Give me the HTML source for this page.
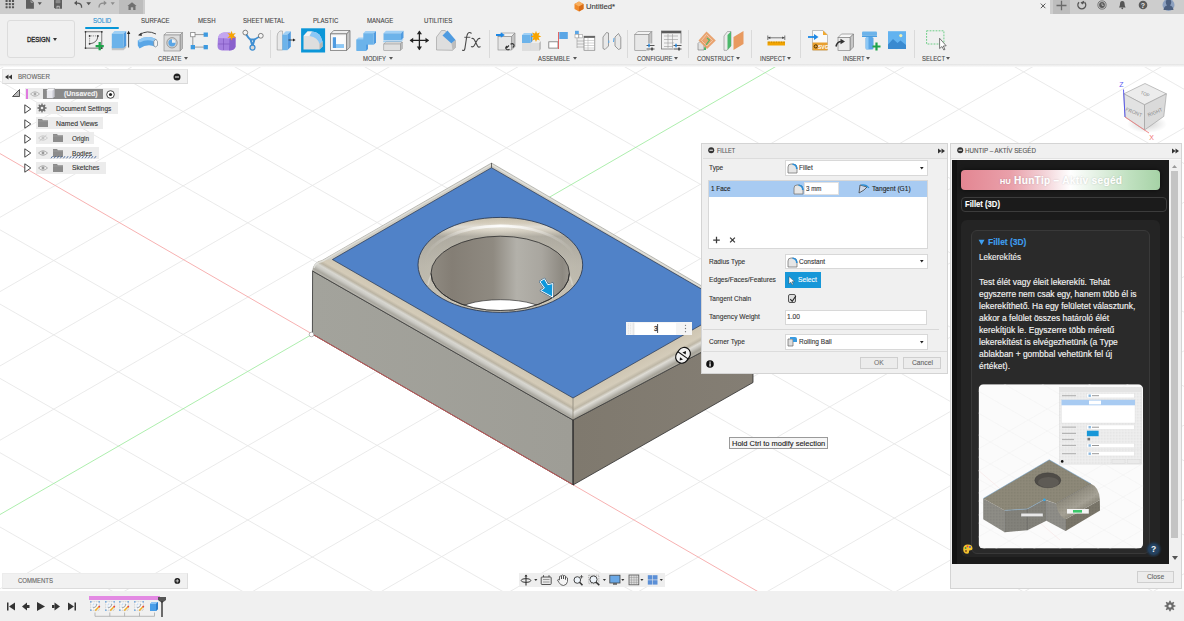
<!DOCTYPE html><html><head><meta charset="utf-8"><style>
html,body{margin:0;padding:0;width:1184px;height:621px;overflow:hidden;background:#fff;font-family:"Liberation Sans",sans-serif;}
.t{position:absolute;white-space:nowrap;line-height:1;-webkit-text-stroke:0.12px currentColor;}
.r{position:absolute;box-sizing:border-box;}
svg{position:absolute;left:0;top:0;overflow:visible}
</style></head><body>
<svg width="1184" height="621" viewBox="0 0 1184 621">
<line x1="-10" y1="-741.8" x2="1200" y2="-50.2" stroke="#e8e8e8" stroke-width="0.9"/>
<line x1="-10" y1="-371.3" x2="1200" y2="-1070.1" stroke="#e8e8e8" stroke-width="0.9"/>
<line x1="-10" y1="-667.5" x2="1200" y2="24.1" stroke="#e8e8e8" stroke-width="0.9"/>
<line x1="-10" y1="-297.0" x2="1200" y2="-995.8" stroke="#e8e8e8" stroke-width="0.9"/>
<line x1="-10" y1="-593.2" x2="1200" y2="98.4" stroke="#e8e8e8" stroke-width="0.9"/>
<line x1="-10" y1="-222.7" x2="1200" y2="-921.5" stroke="#e8e8e8" stroke-width="0.9"/>
<line x1="-10" y1="-518.9" x2="1200" y2="172.7" stroke="#e8e8e8" stroke-width="0.9"/>
<line x1="-10" y1="-148.4" x2="1200" y2="-847.2" stroke="#e8e8e8" stroke-width="0.9"/>
<line x1="-10" y1="-444.6" x2="1200" y2="247.0" stroke="#e8e8e8" stroke-width="0.9"/>
<line x1="-10" y1="-74.1" x2="1200" y2="-772.9" stroke="#e8e8e8" stroke-width="0.9"/>
<line x1="-10" y1="-370.3" x2="1200" y2="321.3" stroke="#e8e8e8" stroke-width="0.9"/>
<line x1="-10" y1="0.2" x2="1200" y2="-698.6" stroke="#e8e8e8" stroke-width="0.9"/>
<line x1="-10" y1="-296.0" x2="1200" y2="395.6" stroke="#e8e8e8" stroke-width="0.9"/>
<line x1="-10" y1="74.5" x2="1200" y2="-624.3" stroke="#e8e8e8" stroke-width="0.9"/>
<line x1="-10" y1="-221.7" x2="1200" y2="469.9" stroke="#e8e8e8" stroke-width="0.9"/>
<line x1="-10" y1="148.8" x2="1200" y2="-550.0" stroke="#e8e8e8" stroke-width="0.9"/>
<line x1="-10" y1="-147.4" x2="1200" y2="544.2" stroke="#e8e8e8" stroke-width="0.9"/>
<line x1="-10" y1="223.1" x2="1200" y2="-475.7" stroke="#e8e8e8" stroke-width="0.9"/>
<line x1="-10" y1="-73.1" x2="1200" y2="618.5" stroke="#e8e8e8" stroke-width="0.9"/>
<line x1="-10" y1="297.4" x2="1200" y2="-401.4" stroke="#e8e8e8" stroke-width="0.9"/>
<line x1="-10" y1="1.2" x2="1200" y2="692.8" stroke="#e8e8e8" stroke-width="0.9"/>
<line x1="-10" y1="371.7" x2="1200" y2="-327.1" stroke="#e8e8e8" stroke-width="0.9"/>
<line x1="-10" y1="75.5" x2="1200" y2="767.1" stroke="#e8e8e8" stroke-width="0.9"/>
<line x1="-10" y1="446.0" x2="1200" y2="-252.8" stroke="#e8e8e8" stroke-width="0.9"/>
<line x1="-10" y1="224.1" x2="1200" y2="915.7" stroke="#e8e8e8" stroke-width="0.9"/>
<line x1="-10" y1="594.6" x2="1200" y2="-104.2" stroke="#e8e8e8" stroke-width="0.9"/>
<line x1="-10" y1="298.4" x2="1200" y2="990.0" stroke="#e8e8e8" stroke-width="0.9"/>
<line x1="-10" y1="668.9" x2="1200" y2="-29.9" stroke="#e8e8e8" stroke-width="0.9"/>
<line x1="-10" y1="372.7" x2="1200" y2="1064.3" stroke="#e8e8e8" stroke-width="0.9"/>
<line x1="-10" y1="743.2" x2="1200" y2="44.4" stroke="#e8e8e8" stroke-width="0.9"/>
<line x1="-10" y1="447.0" x2="1200" y2="1138.6" stroke="#e8e8e8" stroke-width="0.9"/>
<line x1="-10" y1="817.5" x2="1200" y2="118.7" stroke="#e8e8e8" stroke-width="0.9"/>
<line x1="-10" y1="521.3" x2="1200" y2="1212.9" stroke="#e8e8e8" stroke-width="0.9"/>
<line x1="-10" y1="891.8" x2="1200" y2="193.0" stroke="#e8e8e8" stroke-width="0.9"/>
<line x1="-10" y1="595.6" x2="1200" y2="1287.2" stroke="#e8e8e8" stroke-width="0.9"/>
<line x1="-10" y1="966.1" x2="1200" y2="267.3" stroke="#e8e8e8" stroke-width="0.9"/>
<line x1="-10" y1="669.9" x2="1200" y2="1361.5" stroke="#e8e8e8" stroke-width="0.9"/>
<line x1="-10" y1="1040.4" x2="1200" y2="341.6" stroke="#e8e8e8" stroke-width="0.9"/>
<line x1="-10" y1="744.2" x2="1200" y2="1435.8" stroke="#e8e8e8" stroke-width="0.9"/>
<line x1="-10" y1="1114.7" x2="1200" y2="415.9" stroke="#e8e8e8" stroke-width="0.9"/>
<line x1="-10" y1="818.5" x2="1200" y2="1510.1" stroke="#e8e8e8" stroke-width="0.9"/>
<line x1="-10" y1="1189.0" x2="1200" y2="490.2" stroke="#e8e8e8" stroke-width="0.9"/>
<line x1="-10" y1="892.8" x2="1200" y2="1584.4" stroke="#e8e8e8" stroke-width="0.9"/>
<line x1="-10" y1="1263.3" x2="1200" y2="564.5" stroke="#e8e8e8" stroke-width="0.9"/>
<line x1="-10" y1="967.1" x2="1200" y2="1658.7" stroke="#e8e8e8" stroke-width="0.9"/>
<line x1="-10" y1="1337.6" x2="1200" y2="638.8" stroke="#e8e8e8" stroke-width="0.9"/>
<line x1="-10" y1="1041.4" x2="1200" y2="1733.0" stroke="#e8e8e8" stroke-width="0.9"/>
<line x1="-10" y1="1411.9" x2="1200" y2="713.1" stroke="#e8e8e8" stroke-width="0.9"/>
<line x1="-10" y1="147.8" x2="1200" y2="847.1" stroke="#f6a8a8" stroke-width="0.9"/>
<line x1="-10" y1="520.3" x2="1200" y2="-178.5" stroke="#a4eca4" stroke-width="0.9"/>
<defs>
<linearGradient id="gl" x1="0" y1="0" x2="1" y2="0"><stop offset="0" stop-color="#a3a39c"/><stop offset="1" stop-color="#9e9d96"/></linearGradient>
<linearGradient id="gr" x1="0" y1="0" x2="1" y2="0"><stop offset="0" stop-color="#7f796e"/><stop offset="1" stop-color="#847e74"/></linearGradient>
<linearGradient id="fil" x1="0" y1="0" x2="0" y2="1"><stop offset="0" stop-color="#d9d2c2"/><stop offset="0.45" stop-color="#d5cebe"/><stop offset="0.6" stop-color="#e6e4dc"/><stop offset="0.8" stop-color="#b9b6aa"/><stop offset="1" stop-color="#a9a79e"/></linearGradient>
<linearGradient id="hole" x1="0" y1="0" x2="1" y2="0"><stop offset="0" stop-color="#87827a"/><stop offset="0.35" stop-color="#8e8980"/><stop offset="0.55" stop-color="#b4b2ab"/><stop offset="0.8" stop-color="#a3a19a"/><stop offset="1" stop-color="#8b877f"/></linearGradient>
<linearGradient id="ring" x1="0" y1="0" x2="0" y2="1"><stop offset="0" stop-color="#ddd6c6"/><stop offset="0.25" stop-color="#ece9e1"/><stop offset="0.5" stop-color="#c9c4b6"/><stop offset="1" stop-color="#e0dccf"/></linearGradient>
</defs>
<polygon points="312.6,271 573,420 573.3,484.9 312.4,334.1" fill="url(#gl)" stroke="#2e2e2e" stroke-width="0.8"/>
<line x1="312.4" y1="334.1" x2="573.3" y2="484.9" stroke="#c85a5a" stroke-width="0.9"/>
<polygon points="573,420 753,325 753,382.5 573,485" fill="url(#gr)" stroke="#2e2e2e" stroke-width="0.8"/>
<path d="M312.6,271 Q313.5,262 322,260.5 L491.5,163 L753,316 L753,325 L573,420 Z" fill="#cfcdc4" stroke="#8a8a84" stroke-width="0.5"/>
<defs><linearGradient id="bandL" gradientUnits="userSpaceOnUse" x1="332.4" y1="259.5" x2="322.5" y2="276.65"><stop offset="0" stop-color="#cfc7b4"/><stop offset="0.3" stop-color="#d4cbb8"/><stop offset="0.44" stop-color="#bbb4a3"/><stop offset="0.57" stop-color="#d8d7d1"/><stop offset="0.7" stop-color="#cbcac4"/><stop offset="0.86" stop-color="#a9a79f"/><stop offset="1" stop-color="#bdbbb3"/></linearGradient><linearGradient id="bandR" gradientUnits="userSpaceOnUse" x1="573" y1="398" x2="583.1" y2="416.4"><stop offset="0" stop-color="#cfc6b3"/><stop offset="0.35" stop-color="#d4ccba"/><stop offset="0.5" stop-color="#beb7a6"/><stop offset="0.62" stop-color="#dedcd5"/><stop offset="0.72" stop-color="#cac8c1"/><stop offset="0.88" stop-color="#a6a399"/><stop offset="1" stop-color="#b3b0a6"/></linearGradient><linearGradient id="bandB" gradientUnits="userSpaceOnUse" x1="0" y1="0" x2="2" y2="-3.5"><stop offset="0" stop-color="#b9b6ad"/><stop offset="1" stop-color="#e6e4de"/></linearGradient></defs>
<path d="M332.4,259.5 L573,398 L573,420 L312.6,271 Q313.5,262 322,260.5 Z" fill="url(#bandL)"/>
<path d="M573,398 L733,307 L753,316 L753,325 L573,420 Z" fill="url(#bandR)"/>
<line x1="573.2" y1="420" x2="573.2" y2="485" stroke="#2a2a2a" stroke-width="0.8"/>
<line x1="573" y1="398" x2="573" y2="420" stroke="#8a8579" stroke-width="0.8"/>
<path d="M312.6,271 L573,420 L753,325" fill="none" stroke="#2e2e2e" stroke-width="0.8"/>
<polygon points="332.4,259.5 491.5,167.7 732.6,307 573,398" fill="#5082c8" stroke="#25324a" stroke-width="0.7"/>
<path d="M314,268 Q315,263 322,261.5 L491.5,164.5 L753,317.5" fill="none" stroke="#e4e3de" stroke-width="1.4" opacity="0.8"/>
<line x1="491.5" y1="163" x2="491.5" y2="167.7" stroke="#333" stroke-width="0.7"/>
<defs><linearGradient id="ringG" x1="0" y1="0" x2="0" y2="1"><stop offset="0" stop-color="#c7bfac"/><stop offset="0.06" stop-color="#d6cebd"/><stop offset="0.1" stop-color="#e6e3da"/><stop offset="0.14" stop-color="#d9d3c5"/><stop offset="0.2" stop-color="#b5b1a6"/><stop offset="0.5" stop-color="#c6c2b6"/><stop offset="0.9" stop-color="#d0cabb"/><stop offset="1" stop-color="#b9b4a7"/></linearGradient><linearGradient id="ringSide" x1="0" y1="0" x2="1" y2="0"><stop offset="0" stop-color="#000" stop-opacity="0.06"/><stop offset="0.5" stop-color="#000" stop-opacity="0"/><stop offset="1" stop-color="#000" stop-opacity="0.06"/></linearGradient><linearGradient id="wallG" x1="0" y1="0" x2="1" y2="0"><stop offset="0" stop-color="#8f8a81"/><stop offset="0.15" stop-color="#847e75"/><stop offset="0.45" stop-color="#8f8a81"/><stop offset="0.62" stop-color="#b3b1aa"/><stop offset="0.8" stop-color="#a9a69f"/><stop offset="0.95" stop-color="#8d8981"/><stop offset="1" stop-color="#9a968e"/></linearGradient><clipPath id="innerClip"><ellipse cx="500.2" cy="273.35" rx="69.2" ry="37.15"/></clipPath></defs>
<ellipse cx="500.35" cy="264.9" rx="82.35" ry="47.5" fill="url(#ringG)" stroke="#25324a" stroke-width="0.8"/>
<ellipse cx="500.35" cy="264.9" rx="82.35" ry="47.5" fill="url(#ringSide)"/>
<defs><linearGradient id="hlG" gradientUnits="userSpaceOnUse" x1="425" y1="0" x2="575" y2="0"><stop offset="0" stop-color="#fff" stop-opacity="0.0"/><stop offset="0.25" stop-color="#fff" stop-opacity="0.35"/><stop offset="0.5" stop-color="#fff" stop-opacity="0.95"/><stop offset="0.75" stop-color="#fff" stop-opacity="0.35"/><stop offset="1" stop-color="#fff" stop-opacity="0.0"/></linearGradient><linearGradient id="hl2" gradientUnits="userSpaceOnUse" x1="425" y1="0" x2="575" y2="0"><stop offset="0" stop-color="#f2f0ea" stop-opacity="0.8"/><stop offset="0.3" stop-color="#f2f0ea" stop-opacity="0.2"/><stop offset="0.7" stop-color="#f2f0ea" stop-opacity="0.2"/><stop offset="1" stop-color="#f2f0ea" stop-opacity="0.8"/></linearGradient></defs>
<path d="M424,263 A76.5,40 0 0,1 576.6,263" fill="none" stroke="url(#hlG)" stroke-width="2.8"/>
<path d="M428,285 A72.5,42 0 0,1 572.4,285" fill="none" stroke="url(#hl2)" stroke-width="1.6" opacity="0.5"/>
<ellipse cx="500.2" cy="273.35" rx="69.2" ry="37.15" fill="url(#wallG)" stroke="#2c2c2c" stroke-width="0.8"/>
<g clip-path="url(#innerClip)"><ellipse cx="500.7" cy="314" rx="46" ry="14.3" fill="#fff" stroke="#333" stroke-width="0.7"/></g>
<path d="M431,273.35 A69.2,37.15 0 0,0 569.4,273.35" fill="none" stroke="#2c2c2c" stroke-width="0.8"/>
<circle cx="311.5" cy="334.5" r="2.3" fill="#fff" stroke="#999" stroke-width="0.7"/>
</svg>
<div class="r" style="left:0px;top:0px;width:1184px;height:14px;background:#f0f0f0"></div>
<div class="r" style="left:0px;top:0px;width:145px;height:13.8px;background:#cdcdcd"></div>
<div class="r" style="left:119px;top:0px;width:24.30000000000001px;height:13.8px;background:#bdbdbd"></div>
<div class="r" style="left:1050px;top:0px;width:134px;height:13.8px;background:#cdcdcd"></div>
<div class="r" style="left:1053px;top:0px;width:17px;height:13.8px;background:#bdbdbd"></div>
<svg style="left:574px;top:1px" width="10" height="11" viewBox="0 0 10 11"><polygon points="5,0.5 9.5,3 9.5,8 5,10.5 0.5,8 0.5,3" fill="#f08a2a"/><polygon points="5,0.5 9.5,3 5,5.5 0.5,3" fill="#f8b060"/><polygon points="5,5.5 9.5,3 9.5,8 5,10.5" fill="#d86c18"/></svg>
<div class="t" style="left:586.00px;top:2.60px;font-size:7.7px;color:#3a3a3a;">Untitled*</div>
<svg width="1184" height="14" viewBox="0 0 1184 14" style="left:0;top:0"><path d="M1040.8,3.6 L1045.4,8.2 M1045.4,3.6 L1040.8,8.2" stroke="#555" stroke-width="1"/></svg>
<svg width="1184" height="14" viewBox="0 0 1184 14" style="left:0;top:0"><rect x="5.55" y="-0.050000000000000044" width="2.1" height="2.1" rx="0.4" fill="#555"/><rect x="5.55" y="3.05" width="2.1" height="2.1" rx="0.4" fill="#555"/><rect x="5.55" y="6.15" width="2.1" height="2.1" rx="0.4" fill="#555"/><rect x="8.75" y="-0.050000000000000044" width="2.1" height="2.1" rx="0.4" fill="#555"/><rect x="8.75" y="3.05" width="2.1" height="2.1" rx="0.4" fill="#555"/><rect x="8.75" y="6.15" width="2.1" height="2.1" rx="0.4" fill="#555"/><rect x="11.95" y="-0.050000000000000044" width="2.1" height="2.1" rx="0.4" fill="#555"/><rect x="11.95" y="3.05" width="2.1" height="2.1" rx="0.4" fill="#555"/><rect x="11.95" y="6.15" width="2.1" height="2.1" rx="0.4" fill="#555"/><path d="M26,0 L31.5,0 L33.9,2.5 L33.9,8.8 L26,8.8Z" fill="#5e5e5e"/><path d="M31,0.3 L31,2.3 L33,2.3" fill="none" stroke="#cfcfcf" stroke-width="0.6"/><polygon points="37.7,2.3 41.8,2.3 39.75,5.1" fill="#555"/><path d="M54,0 L62,0 L62,8.7 L55.2,8.7 L54,7.5Z" fill="#5e5e5e"/><rect x="55.6" y="0" width="4.8" height="3.2" rx="0.8" fill="#8a8a8a"/><rect x="56.6" y="5.8" width="3" height="2.9" fill="#cfcfcf"/><rect x="57.4" y="6.6" width="1.4" height="2.1" fill="#5e5e5e"/><path d="M81.6,7.7 Q82,3 77,3.1 L75.6,3.1" fill="none" stroke="#555" stroke-width="1.3"/><polygon points="74,3.1 77,0.6 77,5.6" fill="#555"/><polygon points="86.3,2.3 91,2.3 88.65,5.2" fill="#555"/><path d="M99,7.5 Q99,3 103.5,3.1 L105,3.1" fill="none" stroke="#8c8c8c" stroke-width="1.3"/><polygon points="106.8,3.1 103.8,0.6 103.8,5.6" fill="#8c8c8c"/><polygon points="110.6,2.3 114.8,2.3 112.7,5.1" fill="#8c8c8c"/><path d="M127.4,6 L132,2.3 L136.6,6 L135.5,6 L135.5,10 L128.5,10 L128.5,6Z" fill="#6f6f6f"/><rect x="130.8" y="7.3" width="2.4" height="2.7" fill="#bdbdbd"/><path d="M1056.5,5.5 L1066.5,5.5 M1061.5,0.8 L1061.5,10.2" stroke="#6a6a6a" stroke-width="1.3"/><path d="M1079,2.2 A3.9,3.9 0 1,0 1084.6,2.2" fill="none" stroke="#555" stroke-width="1.4"/><path d="M1080.5,2.5 L1082.3,4.6 L1084.3,2.8 L1084,0.8Z" fill="#555"/><circle cx="1102" cy="5" r="4.1" fill="none" stroke="#777" stroke-width="1"/><circle cx="1102" cy="5" r="2.9" fill="#5a5a5a"/><path d="M1102,3.2 L1102,5.3 L1103.8,5.3" stroke="#ddd" stroke-width="0.7" fill="none"/><path d="M1119,7.4 Q1120,6 1120,4 Q1120,1 1122.3,1 Q1124.6,1 1124.6,4 Q1124.6,6 1125.6,7.4 Z" fill="#555"/><circle cx="1122.3" cy="8.3" r="0.9" fill="#555"/><circle cx="1143" cy="5" r="4.3" fill="#5a5a5a"/><text x="1143" y="7.8" font-family="Liberation Sans" font-weight="bold" font-size="7" fill="#e8e8e8" text-anchor="middle">?</text><circle cx="1168.5" cy="5" r="6" fill="#8ca0bf"/><path d="M1163.5,10 Q1164,6 1167,5.5 Q1165.5,4 1165.8,1.5 Q1166.5,-1 1168.5,-1 Q1170.8,-1 1171.2,1.5 Q1171.5,4 1170,5.5 Q1173,6 1173.5,10 Z" fill="#4c5f7f"/></svg>
<div class="r" style="left:0px;top:14px;width:1184px;height:50px;background:#f0f0f0"></div>
<div class="r" style="left:0px;top:63.6px;width:1184px;height:3.8999999999999986px;background:linear-gradient(#e2e2e2,#ececec 40%,#fbfbfb)"></div>
<div class="r" style="left:7px;top:20px;width:67.5px;height:37.5px;border:1px solid #dcdcdc;border-radius:3px;background:#f0f0f0"></div>
<div class="t" style="left:26.70px;top:35.55px;font-size:7.4px;color:#2a2a2a;transform:scaleX(0.814);transform-origin:0 50%;-webkit-text-stroke:0.35px #2a2a2a">DESIGN</div>
<svg style="left:53.4px;top:38px" width="4" height="3"><polygon points="0,0 4,0 2,3" fill="#333"/></svg>
<div class="t" style="left:93.00px;top:17.15px;font-size:7.4px;color:#1c8ed0;transform:scaleX(0.820);transform-origin:0 50%;">SOLID</div>
<div class="t" style="left:141.00px;top:17.15px;font-size:7.4px;color:#474747;transform:scaleX(0.820);transform-origin:0 50%;">SURFACE</div>
<div class="t" style="left:197.60px;top:17.15px;font-size:7.4px;color:#474747;transform:scaleX(0.820);transform-origin:0 50%;">MESH</div>
<div class="t" style="left:242.60px;top:17.15px;font-size:7.4px;color:#474747;transform:scaleX(0.820);transform-origin:0 50%;">SHEET METAL</div>
<div class="t" style="left:312.50px;top:17.15px;font-size:7.4px;color:#474747;transform:scaleX(0.820);transform-origin:0 50%;">PLASTIC</div>
<div class="t" style="left:367.00px;top:17.15px;font-size:7.4px;color:#474747;transform:scaleX(0.820);transform-origin:0 50%;">MANAGE</div>
<div class="t" style="left:423.60px;top:17.15px;font-size:7.4px;color:#474747;transform:scaleX(0.820);transform-origin:0 50%;">UTILITIES</div>
<div class="r" style="left:85px;top:27px;width:34px;height:2px;background:#0696d7;border-radius:1px"></div>
<div class="t" style="left:158.00px;top:54.65px;font-size:7.4px;color:#4a4a4a;transform:scaleX(0.800);transform-origin:0 50%;">CREATE</div>
<svg style="left:183.6px;top:56.5px" width="4" height="3"><polygon points="0,0 4,0 2,2.8" fill="#555"/></svg>
<div class="t" style="left:363.00px;top:54.65px;font-size:7.4px;color:#4a4a4a;transform:scaleX(0.800);transform-origin:0 50%;">MODIFY</div>
<svg style="left:388.5px;top:56.5px" width="4" height="3"><polygon points="0,0 4,0 2,2.8" fill="#555"/></svg>
<div class="t" style="left:538.00px;top:54.65px;font-size:7.4px;color:#4a4a4a;transform:scaleX(0.800);transform-origin:0 50%;">ASSEMBLE</div>
<svg style="left:572.6px;top:56.5px" width="4" height="3"><polygon points="0,0 4,0 2,2.8" fill="#555"/></svg>
<div class="t" style="left:636.50px;top:54.65px;font-size:7.4px;color:#4a4a4a;transform:scaleX(0.800);transform-origin:0 50%;">CONFIGURE</div>
<svg style="left:673.6px;top:56.5px" width="4" height="3"><polygon points="0,0 4,0 2,2.8" fill="#555"/></svg>
<div class="t" style="left:696.60px;top:54.65px;font-size:7.4px;color:#4a4a4a;transform:scaleX(0.800);transform-origin:0 50%;">CONSTRUCT</div>
<svg style="left:736.4px;top:56.5px" width="4" height="3"><polygon points="0,0 4,0 2,2.8" fill="#555"/></svg>
<div class="t" style="left:760.00px;top:54.65px;font-size:7.4px;color:#4a4a4a;transform:scaleX(0.800);transform-origin:0 50%;">INSPECT</div>
<svg style="left:786.8px;top:56.5px" width="4" height="3"><polygon points="0,0 4,0 2,2.8" fill="#555"/></svg>
<div class="t" style="left:842.80px;top:54.65px;font-size:7.4px;color:#4a4a4a;transform:scaleX(0.800);transform-origin:0 50%;">INSERT</div>
<svg style="left:865.6px;top:56.5px" width="4" height="3"><polygon points="0,0 4,0 2,2.8" fill="#555"/></svg>
<div class="t" style="left:922.00px;top:54.65px;font-size:7.4px;color:#4a4a4a;transform:scaleX(0.800);transform-origin:0 50%;">SELECT</div>
<svg style="left:946.4px;top:56.5px" width="4" height="3"><polygon points="0,0 4,0 2,2.8" fill="#555"/></svg>
<div class="r" style="left:270px;top:30px;width:1px;height:28px;background:#dadada"></div>
<div class="r" style="left:488.5px;top:30px;width:1.0px;height:28px;background:#dadada"></div>
<div class="r" style="left:627px;top:30px;width:1px;height:28px;background:#dadada"></div>
<div class="r" style="left:688px;top:30px;width:1px;height:28px;background:#dadada"></div>
<div class="r" style="left:751.4px;top:30px;width:1.0px;height:28px;background:#dadada"></div>
<div class="r" style="left:800px;top:30px;width:1px;height:28px;background:#dadada"></div>
<div class="r" style="left:913.5px;top:30px;width:1.0px;height:28px;background:#dadada"></div>
<svg width="1184" height="70" viewBox="0 0 1184 70" style="left:0;top:0"><rect x="85.5" y="31.8" width="16.3" height="16.3" fill="none" stroke="#555" stroke-width="0.8"/><circle cx="85.5" cy="31.8" r="0.9" fill="#333"/><circle cx="101.8" cy="31.8" r="0.9" fill="#333"/><circle cx="85.5" cy="48.1" r="0.9" fill="#333"/><circle cx="101.8" cy="48.1" r="0.9" fill="#333"/><path d="M89.6,43.8 L89.6,35.9 L97.9,35.9" fill="none" stroke="#666" stroke-width="0.7" stroke-dasharray="1.3 0.9"/><path d="M89.6,43.8 Q97.5,43 97.9,35.9" fill="none" stroke="#444" stroke-width="0.8"/><circle cx="89.6" cy="35.9" r="0.9" fill="#333"/><circle cx="97.9" cy="35.9" r="0.9" fill="#333"/><circle cx="89.6" cy="43.8" r="0.9" fill="#333"/><path d="M99.7,42 L99.7,50.2 M95.6,46.1 L103.8,46.1" stroke="#1ea34a" stroke-width="2.3"/><polygon points="111.8,46 123.5,46 126.2,43.5 126.2,47.8 123.5,50.2 111.8,50.2" fill="#c6c6c6"/><polygon points="111.8,33.7 114.5,31 126.2,31 123.5,33.7" fill="#9fd0f6" stroke="none" stroke-width="0.6"/><polygon points="123.5,33.7 126.2,31 126.2,45.5 123.5,48.2" fill="#4f9be0" stroke="none" stroke-width="0.6"/><rect x="111.8" y="33.7" width="11.7" height="14.5" fill="#6cb3ea" stroke="none" stroke-width="0.6"/><path d="M128.6,47.5 L128.6,32" stroke="#222" stroke-width="0.8"/><polygon points="126.9,34 128.6,30.8 130.3,34" fill="#222"/><path d="M139.5,34.8 Q147,29.5 156,34" fill="none" stroke="#333" stroke-width="0.9"/><polygon points="138,35.2 141.5,32.5 141.8,36" fill="#333"/><path d="M137.8,40.5 Q147,34.5 155.8,39 L157.5,41.5 L157.5,45.5 L155.5,47 Q148,43 139.5,48.5 L137.8,45.5 Z" fill="#5aa6e6"/><path d="M137.8,40.5 Q147,34.5 155.8,39 L153.8,41.5 Q147,38.5 139.8,42.5 Z" fill="#92c9f4"/><path d="M153.8,41.5 L155.8,39 L157.5,41.5 L157.5,45.5 L155.5,47 L153.8,45.5 Z" fill="#f4f4f4" stroke="#777" stroke-width="0.6"/><polygon points="164,35.0 166.5,32.5 182.5,32.5 180,35.0" fill="#eeeeee" stroke="#888" stroke-width="0.6"/><polygon points="180,35.0 182.5,32.5 182.5,48.5 180,51.0" fill="#bdbdbd" stroke="#888" stroke-width="0.6"/><rect x="164" y="35.0" width="16" height="16" fill="#dcdcdc" stroke="#888" stroke-width="0.6"/><circle cx="172" cy="42.8" r="5.2" fill="#d2d2d2" stroke="#8a8a8a" stroke-width="0.8"/><circle cx="172" cy="42.8" r="3.6" fill="#5aa6e6"/><path d="M172,39.2 A3.6,3.6 0 0,1 175.6,42.8 L172,42.8Z" fill="#f2f2f2"/><path d="M192.8,34.6 L205.7,34.6 M192.8,34.6 L192.8,47.1 M192.8,47.1 L205.7,47.1" stroke="#9a9a9a" stroke-width="1"/><rect x="190.7" y="32.5" width="4.3" height="4.3" fill="#fff" stroke="#777" stroke-width="0.7"/><rect x="203.6" y="32.5" width="4.3" height="4.3" fill="#3d9ae0"/><rect x="190.7" y="45" width="4.3" height="4.3" fill="#3d9ae0"/><rect x="203.6" y="45" width="4.3" height="4.3" fill="#3d9ae0"/><path d="M218,38 Q219,33 224,32.5 L230,32.5 L235.5,37 L235.5,47 Q234,50.5 229,50.5 L222,50.5 Q217.5,50 217.5,46 Z" fill="#a57fe0"/><path d="M218,38 Q219,33 224,32.5 L230,32.5 L235.5,37 L229.5,38.5 Z" fill="#c4a6f0"/><path d="M229.5,38.5 L235.5,37 L235.5,47 Q234,50.5 229,50.5 Z" fill="#8a60cc"/><path d="M223.5,38.5 L223.5,50 M218,44 L229.5,44" stroke="#7a52bb" stroke-width="0.6"/><polygon points="231.6,30.8 232.6,33.8 235.8,33 233.6,35.6 235.8,38 232.6,37.4 231.6,40.4 230.6,37.4 227.4,38 229.6,35.6 227.4,33 230.6,33.8" fill="#f7a400"/><path d="M245.5,33 Q248.5,38.5 250.5,39.5 L252.5,46 L254.5,39.5 Q257,38 260.5,36 M250.5,39.5 L254.5,39.5" fill="none" stroke="#3f8fd2" stroke-width="2" stroke-linejoin="round"/><circle cx="245.3" cy="32.6" r="2.4" fill="#f4f4f4" stroke="#666" stroke-width="0.8"/><circle cx="260.8" cy="35.8" r="2.4" fill="#f4f4f4" stroke="#666" stroke-width="0.8"/><circle cx="252.5" cy="47.6" r="2.5" fill="#d8d8d8" stroke="#3f8fd2" stroke-width="1.3"/><path d="M282.5,31 L280,31 Q277.2,32.5 277.2,36 L277.2,50 L282.5,50Z" fill="#e8e8e8" stroke="#999" stroke-width="0.6"/><polygon points="282.3,34.7 285.8,31.2 290.8,31.2 287.3,34.7" fill="#9fd0f6" stroke="none" stroke-width="0.6"/><polygon points="287.3,34.7 290.8,31.2 290.8,46.7 287.3,50.2" fill="#4f9be0" stroke="none" stroke-width="0.6"/><rect x="282.3" y="34.7" width="5" height="15.5" fill="#6cb3ea" stroke="none" stroke-width="0.6"/><path d="M288.5,40 L294,40" stroke="#222" stroke-width="0.8"/><polygon points="293,38.5 295.6,40 293,41.5" fill="#222"/><rect x="301.1" y="28.3" width="24" height="24.2" fill="#0b96d8"/><path d="M303.5,49.5 L303.5,36 L307.5,31.5 L312,31.5 Q320.5,32 322.5,41.5 L322.5,46.5 L319.5,49.5Z" fill="#dedede"/><path d="M303.5,36 L307.5,31.5 L312,31.5 L309.5,36 Z" fill="#f2f2f2"/><path d="M309.5,36 L312,31.5 Q320.5,32 322.5,41.5 L319.5,44 Q318,37.5 309.5,36Z" fill="#8cc8f6"/><path d="M319.5,44 L322.5,41.5 L322.5,46.5 L319.5,49.5Z" fill="#b5b5b5"/><polygon points="330.4,33.9 333.79999999999995,30.5 349.99999999999994,30.5 346.59999999999997,33.9" fill="#ededed" stroke="#7a7a7a" stroke-width="0.8"/><polygon points="346.59999999999997,33.9 349.99999999999994,30.5 349.99999999999994,47.1 346.59999999999997,50.5" fill="#c6c6c6" stroke="#7a7a7a" stroke-width="0.8"/><rect x="330.4" y="33.9" width="16.2" height="16.6" fill="#f6f6f6" stroke="#7a7a7a" stroke-width="0.8"/><rect x="332.3" y="35.8" width="12.4" height="12.8" fill="#fbfbfb"/><path d="M332.8,37.2 L336,37.2 L336,44.6 L344,44.6 L344,48 L332.8,48Z" fill="#4f9be0"/><path d="M336,44.6 L344,44.6 L344,48 L336,48Z" fill="#8cc8f6"/><polygon points="356.5,39.5 358.5,37.5 368.0,37.5 366.0,39.5" fill="#9fd0f6" stroke="none" stroke-width="0.6"/><polygon points="366.0,39.5 368.0,37.5 368.0,49.0 366.0,51.0" fill="#4f9be0" stroke="none" stroke-width="0.6"/><rect x="356.5" y="39.5" width="9.5" height="11.5" fill="#6cb3ea" stroke="none" stroke-width="0.6"/><polygon points="363.3,33.2 365.5,31 376.0,31 373.8,33.2" fill="#9fd0f6" stroke="none" stroke-width="0.6"/><polygon points="373.8,33.2 376.0,31 376.0,42.5 373.8,44.7" fill="#4f9be0" stroke="none" stroke-width="0.6"/><rect x="363.3" y="33.2" width="10.5" height="11.5" fill="#6cb3ea" stroke="none" stroke-width="0.6"/><rect x="356.5" y="39.5" width="9.5" height="11" fill="#6cb3ea"/><polygon points="383.5,33.3 386.0,30.8 403.5,30.8 401.0,33.3" fill="#9fd0f6" stroke="none" stroke-width="0.6"/><polygon points="401.0,33.3 403.5,30.8 403.5,37.8 401.0,40.3" fill="#4f9be0" stroke="none" stroke-width="0.6"/><rect x="383.5" y="33.3" width="17.5" height="7" fill="#6cb3ea" stroke="none" stroke-width="0.6"/><polygon points="383.2,40.8 401,40.8 403.2,38.5 403.2,39.8 401,42.2 383.2,42.2" fill="#9fd0f6"/><polygon points="383.8,44 385.8,42 402.3,42 400.3,44" fill="#eeeeee" stroke="#888" stroke-width="0.5"/><polygon points="400.3,44 402.3,42 402.3,48.5 400.3,50.5" fill="#c2c2c2" stroke="#888" stroke-width="0.5"/><rect x="383.8" y="44" width="16.5" height="6.5" fill="#e0e0e0" stroke="#888" stroke-width="0.5"/><path d="M419.4,31.5 L419.4,49.4 M410.5,40.4 L428.3,40.4" stroke="#222" stroke-width="1.3"/><polygon points="416.8,34.2 419.4,30.6 422,34.2" fill="#222"/><polygon points="416.8,46.6 419.4,50.2 422,46.6" fill="#222"/><polygon points="413.2,37.8 409.6,40.4 413.2,43" fill="#222"/><polygon points="425.5,37.8 429.1,40.4 425.5,43" fill="#222"/><path d="M436.5,50 L436.5,37 L441.5,30.5 L445,30.5 L455.5,40.5 L455.5,47.5 L452.5,50.3 Z" fill="#dedede" stroke="#999" stroke-width="0.6"/><polygon points="442.5,35.5 447.5,30.5 455.5,40 451.5,43.5" fill="#4f9be0"/><polygon points="451.5,43.5 455.5,40 455.5,47.5 452.5,50.3" fill="#bdbdbd"/><path d="M471.5,33.5 Q469.5,31.5 467.8,33.5 Q466.8,35 466.2,40 L464.8,49 Q464,51.5 462.3,50" fill="none" stroke="#4a4a4a" stroke-width="1.1"/><path d="M464.3,37.3 L470.3,37.3" stroke="#4a4a4a" stroke-width="0.9"/><path d="M471.5,38.5 Q473.5,37.8 474.5,40 L477.5,46 Q478.5,48 480.5,46.5 M480.3,38.5 Q478.5,38 477.3,40 L474.3,45.5 Q473,47.5 471,46.5" fill="none" stroke="#4a4a4a" stroke-width="1.1"/><polygon points="498,36.5 501.5,33 515.0,33 511.5,36.5" fill="#f2f2f2" stroke="#888" stroke-width="0.6"/><polygon points="511.5,36.5 515.0,33 515.0,46.5 511.5,50.0" fill="#c4c4c4" stroke="#888" stroke-width="0.6"/><rect x="498" y="36.5" width="13.5" height="13.5" fill="#e6e6e6" stroke="#888" stroke-width="0.6"/><path d="M496,35 L501.5,35" stroke="#1e88e5" stroke-width="2"/><polygon points="500.8,32.2 504.8,35 500.8,37.8" fill="#1e88e5"/><path d="M506.5,48 L509,45.5 M509.5,49.2 Q507.3,50.5 506.2,49 Q505,47.5 507,46 M510.5,44.2 Q512.5,43 513.6,44.3 Q514.8,46 512.7,47.5" fill="none" stroke="#333" stroke-width="1.1"/><polygon points="522,43 524,41 532.5,41 530.5,43" fill="#eeeeee" stroke="none" stroke-width="0.6"/><polygon points="530.5,43 532.5,41 532.5,49 530.5,51" fill="#c0c0c0" stroke="none" stroke-width="0.6"/><rect x="522" y="43" width="8.5" height="8" fill="#dedede" stroke="none" stroke-width="0.6"/><polygon points="530.5,43 532.5,41 541.0,41 539.0,43" fill="#eeeeee" stroke="none" stroke-width="0.6"/><polygon points="539.0,43 541.0,41 541.0,49 539.0,51" fill="#c0c0c0" stroke="none" stroke-width="0.6"/><rect x="530.5" y="43" width="8.5" height="8" fill="#dedede" stroke="none" stroke-width="0.6"/><polygon points="522,35 524,33 532.5,33 530.5,35" fill="#9fd0f6" stroke="none" stroke-width="0.6"/><polygon points="530.5,35 532.5,33 532.5,41 530.5,43" fill="#4f9be0" stroke="none" stroke-width="0.6"/><rect x="522" y="35" width="8.5" height="8" fill="#6cb3ea" stroke="none" stroke-width="0.6"/><polygon points="536,30.8 537,33.5 539.8,32.5 538.5,35.3 541.3,36.5 538.5,37.6 539.8,40.4 537,39.4 536,42 535,39.4 532.2,40.4 533.5,37.6 530.7,36.5 533.5,35.3 532.2,32.5 535,33.5" fill="#f7a400"/><rect x="548.8" y="41.8" width="9.2" height="6.3" fill="#fff" stroke="#777" stroke-width="0.8"/><path d="M558.5,32 L558.5,49" stroke="#e05555" stroke-width="0.9"/><rect x="559.3" y="32" width="8.5" height="7" fill="#5aa6e6"/><rect x="575" y="30.8" width="3.8" height="3.3" fill="#5aa6e6"/><rect x="575" y="34.3" width="3.8" height="3.6" fill="#fff" stroke="#888" stroke-width="0.5"/><rect x="578.9" y="34.3" width="3.8" height="3.6" fill="#fff" stroke="#888" stroke-width="0.5"/><path d="M577,38 L577,48 M577,41 L584,41 M577,44 L584,44 M577,47 L584,47" stroke="#999" stroke-width="0.6"/><rect x="584" y="36.2" width="10.8" height="14" fill="#fff" stroke="#777" stroke-width="0.7"/><rect x="584" y="36.2" width="10.8" height="1.6" fill="#555"/><path d="M584,40.5 L594.8,40.5 M584,43 L594.8,43 M584,45.5 L594.8,45.5 M584,48 L594.8,48 M588,37.8 L588,50.2" stroke="#aaa" stroke-width="0.5"/><path d="M603,37 L606.5,32.5 L608.5,33 L608.5,46 L605,49.5 L603,48.5Z" fill="#e8e8e8" stroke="#777" stroke-width="0.7"/><path d="M615,37 L618.5,33.5 L620.8,37.5 L620.8,48.5 L618.5,49.5 L615,46Z" fill="#e8e8e8" stroke="#777" stroke-width="0.7"/><path d="M614,38 L613.5,42" stroke="#5aa6e6" stroke-width="1"/><path d="M608.8,40.5 L608.8,43" stroke="#5aa6e6" stroke-width="1"/><polygon points="634.8,34.5 637.8,31.5 651.8,31.5 648.8,34.5" fill="#f2f2f2" stroke="#888" stroke-width="0.6"/><polygon points="648.8,34.5 651.8,31.5 651.8,47.5 648.8,50.5" fill="#c6c6c6" stroke="#888" stroke-width="0.6"/><rect x="634.8" y="34.5" width="14" height="16" fill="#e8e8e8" stroke="#888" stroke-width="0.6"/><rect x="646" y="43.5" width="9" height="7" fill="#f0f0f0"/><path d="M646.5,45.5 L654.5,45.5 M646.5,49 L654.5,49" stroke="#444" stroke-width="0.9"/><path d="M649,43.8 L649,47.2" stroke="#1e88e5" stroke-width="1.4"/><path d="M652,47.5 L652,50.5" stroke="#333" stroke-width="1.4"/><rect x="661.5" y="31" width="19.5" height="18" fill="#f2f2f2" stroke="#777" stroke-width="0.8"/><rect x="661.5" y="31" width="19.5" height="2.3" fill="#5b5b5b"/><path d="M664,36 L678,36 M664,39.5 L678,39.5 M664,43 L674,43 M664,46.5 L674,46.5 M668,34 L668,48 M672.5,34 L672.5,48" stroke="#999" stroke-width="0.6"/><rect x="673" y="43.5" width="9" height="7" fill="#f0f0f0"/><path d="M673.5,45.5 L681.5,45.5 M673.5,49 L681.5,49" stroke="#444" stroke-width="0.9"/><path d="M676,43.8 L676,47.2" stroke="#1e88e5" stroke-width="1.4"/><path d="M679,47.5 L679,50.5" stroke="#333" stroke-width="1.4"/><path d="M698,50 L698,43.5 L700,41.5 L704,41.5 L704,50Z" fill="#e2e2e2" stroke="#777" stroke-width="0.6"/><polygon points="704,48 706,45 706,50 704,50" fill="#4cb86a"/><polygon points="706.5,31.5 715.8,40.5 707,49 698.5,40.5" fill="#e89a60" opacity="0.9"/><polygon points="706.5,34.5 712.6,40.5 707,46 701.5,40.5" fill="none" stroke="#f4d8c2" stroke-width="0.7"/><path d="M707,38 L709.5,40 L706,45" fill="none" stroke="#4cb86a" stroke-width="1.2"/><path d="M724,36 L727.5,31.5 L731,31.5 L731,46 L727,50.3 L724,50.3Z" fill="#ececec" stroke="#888" stroke-width="0.6"/><path d="M727.5,35 L731,31.5 L731,46 L727.5,50Z" fill="#4cb86a"/><polygon points="733.5,37 743.5,31 743.5,44 733.5,50" fill="#e89a60"/><rect x="767.5" y="41.5" width="17.5" height="4" fill="#f2a400"/><path d="M769,41.5 L769,43.2 M771.5,41.5 L771.5,42.7 M774,41.5 L774,43.2 M776.5,41.5 L776.5,42.7 M779,41.5 L779,43.2 M781.5,41.5 L781.5,42.7 M784,41.5 L784,43.2" stroke="#9a6a00" stroke-width="0.5"/><path d="M767.8,35.5 L767.8,40 M784.8,35.5 L784.8,40 M768,37.8 L784.5,37.8" stroke="#444" stroke-width="0.7"/><polygon points="768,37.8 770.3,36.6 770.3,39" fill="#444"/><polygon points="784.5,37.8 782.2,36.6 782.2,39" fill="#444"/><path d="M812.5,30.5 L823,30.5 L827.5,35 L827.5,50 L812.5,50Z" fill="#fafafa" stroke="#999" stroke-width="0.6"/><polygon points="823,30.5 827.5,35 823,35" fill="#f0a830"/><rect x="812.5" y="42.5" width="15" height="7.8" fill="#e8a030"/><circle cx="815.8" cy="46.4" r="1.6" fill="none" stroke="#4a3000" stroke-width="1"/><text x="818" y="48.6" font-family="Liberation Sans" font-weight="bold" font-size="5" fill="#fff">SVG</text><path d="M808,37 L815,37" stroke="#1e88e5" stroke-width="1.8"/><polygon points="814,34 818.5,37 814,40" fill="#1e88e5"/><polygon points="838,37.5 841.5,34 853.5,34 850,37.5" fill="#f6f6f6" stroke="#777" stroke-width="0.6"/><polygon points="850,37.5 853.5,34 853.5,47 850,50.5" fill="#c6c6c6" stroke="#777" stroke-width="0.6"/><rect x="838" y="37.5" width="12" height="13" fill="#ececec" stroke="#777" stroke-width="0.6"/><path d="M836,46.5 Q837,41.5 841.5,41.5" fill="none" stroke="#333" stroke-width="1.6"/><polygon points="840.5,38.8 845,41.6 840.5,44.2" fill="#333"/><rect x="862" y="31.5" width="15" height="4" rx="1" fill="#6cb3ea"/><rect x="862" y="35.5" width="15" height="1.5" fill="#4a9ee0"/><rect x="865.5" y="37" width="8" height="12.5" rx="1.5" fill="#5aa6e6"/><rect x="866" y="37" width="2.5" height="12" fill="#8cc8f6"/><path d="M876.5,42.5 L876.5,50.5 M872.5,46.5 L880.5,46.5" stroke="#1ea34a" stroke-width="2.2"/><rect x="888" y="31.2" width="18" height="17.8" fill="#63b3f0"/><path d="M888,44.5 L893,39 L897.5,43 L900.5,40.5 L906,45 L906,49 L888,49Z" fill="#3a8ad0"/><circle cx="900.8" cy="35.6" r="1.6" fill="#f4f0b0"/><rect x="926.6" y="30.8" width="17.3" height="13.2" fill="none" stroke="#5fc97a" stroke-width="0.9" stroke-dasharray="1.8 1.2"/><path d="M939.6,38.3 L939.6,48.5 L942,46.5 L943.8,50 L945,49.4 L943.3,46 L946.2,45.8Z" fill="#fff" stroke="#444" stroke-width="0.7"/></svg>
<div class="r" style="left:2px;top:69px;width:186px;height:15px;background:#f1f1f1;border:1px solid #e6e6e6;border-right-color:#dcdcdc;border-bottom-color:#dadada"></div>
<div class="t" style="left:18.00px;top:74.29px;font-size:6.95px;color:#666;transform:scaleX(0.891);transform-origin:0 50%;">BROWSER</div>
<svg style="left:5px;top:74px" width="8" height="6"><polygon points="0,3 3.5,0.5 3.5,5.5" fill="#333"/><polygon points="3.5,3 7,0.5 7,5.5" fill="#333"/></svg>
<svg style="left:173px;top:72.5px" width="8" height="8"><circle cx="4" cy="4" r="3.5" fill="#222"/><rect x="2" y="3.5" width="4" height="1" fill="#fff"/></svg>
<div class="r" style="left:701px;top:143px;width:247px;height:231px;background:#f0f0f0;border:1px solid #d4d4d4"></div>
<div class="r" style="left:702.5px;top:144px;width:244.5px;height:14.5px;background:#ececec;border-bottom:1px solid #dcdcdc"></div>
<div class="t" style="left:716.80px;top:147.79px;font-size:6.95px;color:#555;transform:scaleX(0.794);transform-origin:0 50%;">FILLET</div>
<div class="r" style="left:950px;top:143px;width:232px;height:446px;background:#f0f0f0;border:1px solid #d4d4d4"></div>
<div class="t" style="left:965.00px;top:147.99px;font-size:6.95px;color:#555;transform:scaleX(0.894);transform-origin:0 50%;">HUNTIP – AKTÍV SEGÉD</div>
<div class="r" style="left:951px;top:157.6px;width:230px;height:0.9000000000000057px;background:#e2e2e2"></div>
<div class="r" style="left:951px;top:158.5px;width:230px;height:1.3000000000000114px;background:#f8f8f8"></div>
<div class="r" style="left:952px;top:159.8px;width:217px;height:404.7px;background:#1b1b1b"></div>
<div class="r" style="left:952px;top:159.8px;width:5px;height:404.7px;background:#121212"></div>
<div class="r" style="left:1169px;top:159.8px;width:12px;height:404.2px;background:#f0f0f0"></div>
<div class="r" style="left:0px;top:591px;width:1184px;height:30px;background:#f0f0f0"></div>
<div class="r" style="left:2px;top:573px;width:186px;height:15.5px;background:#f1f1f1;border:1px solid #ececec;border-right-color:#dedede;border-bottom-color:#dcdcdc"></div>
<div class="t" style="left:18.00px;top:577.79px;font-size:6.95px;color:#666;transform:scaleX(0.863);transform-origin:0 50%;">COMMENTS</div>
<svg style="left:708.2px;top:147.3px" width="7" height="7"><circle cx="3.2" cy="3.2" r="3" fill="#333"/><rect x="1.5" y="2.7" width="3.4" height="1" fill="#fff"/></svg>
<svg style="left:938px;top:148px" width="8" height="6"><polygon points="0,0.5 3.5,3 0,5.5" fill="#333"/><polygon points="3.5,0.5 7,3 3.5,5.5" fill="#333"/></svg>
<div class="t" style="left:709.00px;top:163.90px;font-size:7.7px;color:#333;transform:scaleX(0.850);transform-origin:0 50%;">Type</div>
<div class="r" style="left:785px;top:160px;width:142.5px;height:15.5px;background:#fff;border:1px solid #d8d8d8"></div>
<div class="t" style="left:799.00px;top:163.75px;font-size:7.7px;color:#333;transform:scaleX(0.850);transform-origin:0 50%;">Fillet</div>
<svg style="left:920.3px;top:166.55px" width="4" height="3"><polygon points="0,0 3.6,0 1.8,2.5" fill="#222"/></svg>
<svg style="left:787px;top:162.75px" width="11" height="11" viewBox="0 0 11 11"><path d="M1,10 L1,4 Q1,1 4,1 L6,1 Q10,1 10,5 L10,10 Z" fill="#e6e6e6" stroke="#777" stroke-width="0.8"/><path d="M5.5,1.2 Q9.8,1.5 9.8,6" fill="none" stroke="#2b8fd8" stroke-width="1.6"/></svg>
<div class="r" style="left:707.5px;top:180px;width:220.5px;height:69px;background:#fff;border:1px solid #d8d8d8"></div>
<div class="r" style="left:708.5px;top:181px;width:218.5px;height:15.599999999999994px;background:#a8cbf2"></div>
<div class="t" style="left:711.00px;top:184.50px;font-size:7.7px;color:#222;transform:scaleX(0.833);transform-origin:0 50%;">1 Face</div>
<svg style="left:793px;top:183.5px" width="11" height="11" viewBox="0 0 11 11"><path d="M1,10 L1,4 Q1,1 4,1 L6,1 Q10,1 10,5 L10,10 Z" fill="#e6e6e6" stroke="#777" stroke-width="0.8"/><path d="M5.5,1.2 Q9.8,1.5 9.8,6" fill="none" stroke="#2b8fd8" stroke-width="1.6"/></svg>
<div class="r" style="left:803.5px;top:181.8px;width:35.0px;height:13.699999999999989px;background:#fff;border:1px solid #e0e0e0"></div>
<div class="t" style="left:805.50px;top:184.60px;font-size:7.7px;color:#333;transform:scaleX(0.805);transform-origin:0 50%;">3 mm</div>
<svg style="left:858px;top:183px" width="12" height="11" viewBox="0 0 12 11"><path d="M1,10 L2,2 L9,4 L6,7 Z" fill="#cfd8e8" stroke="#444" stroke-width="0.8"/><path d="M3,2 Q8,1 11,5" fill="none" stroke="#2b8fd8" stroke-width="1.2"/></svg>
<div class="t" style="left:872.00px;top:184.60px;font-size:7.7px;color:#222;transform:scaleX(0.861);transform-origin:0 50%;">Tangent (G1)</div>
<svg width="1184" height="621" viewBox="0 0 1184 621" style="left:0;top:0"><path d="M713.2,240 L719.8,240 M716.5,236.7 L716.5,243.3" stroke="#3a3a3a" stroke-width="1.25"/><path d="M730.1,237.6 L734.9,242.4 M734.9,237.6 L730.1,242.4" stroke="#3a3a3a" stroke-width="1.25"/></svg>
<div class="t" style="left:709.00px;top:257.60px;font-size:7.7px;color:#333;transform:scaleX(0.850);transform-origin:0 50%;">Radius Type</div>
<div class="r" style="left:785px;top:253.8px;width:142.5px;height:15.699999999999989px;background:#fff;border:1px solid #d8d8d8"></div>
<div class="t" style="left:799.00px;top:257.65px;font-size:7.7px;color:#333;transform:scaleX(0.850);transform-origin:0 50%;">Constant</div>
<svg style="left:920.3px;top:260.45px" width="4" height="3"><polygon points="0,0 3.6,0 1.8,2.5" fill="#222"/></svg>
<svg style="left:787px;top:256.65px" width="11" height="11" viewBox="0 0 11 11"><path d="M1,10 L1,4 Q1,1 4,1 L6,1 Q10,1 10,5 L10,10 Z" fill="#e6e6e6" stroke="#777" stroke-width="0.8"/><path d="M5.5,1.2 Q9.8,1.5 9.8,6" fill="none" stroke="#2b8fd8" stroke-width="1.6"/></svg>
<div class="t" style="left:709.00px;top:276.20px;font-size:7.7px;color:#333;transform:scaleX(0.865);transform-origin:0 50%;">Edges/Faces/Features</div>
<div class="r" style="left:785px;top:271.7px;width:35.5px;height:16.69999999999999px;background:#1797d8"></div>
<svg style="left:788px;top:275.5px" width="7" height="9" viewBox="0 0 7 9"><path d="M1,0.5 L1,8 L2.8,6.2 L4.2,8.8 L5.2,8.3 L3.9,5.8 L6.5,5.6 Z" fill="#fff" stroke="#333" stroke-width="0.4"/></svg>
<div class="t" style="left:797.80px;top:276.20px;font-size:7.7px;color:#fff;transform:scaleX(0.878);transform-origin:0 50%;">Select</div>
<div class="t" style="left:709.00px;top:294.60px;font-size:7.7px;color:#333;transform:scaleX(0.850);transform-origin:0 50%;">Tangent Chain</div>
<div class="r" style="left:787.6px;top:294.3px;width:8.600000000000023px;height:8.599999999999966px;background:#dedede;border:1px solid #555;border-radius:2px"></div>
<svg style="left:788.5px;top:295px" width="8" height="8" viewBox="0 0 8 8"><path d="M1.3,4.2 L3.2,6.3 L6.8,1" fill="none" stroke="#222" stroke-width="1.1"/></svg>
<div class="t" style="left:709.00px;top:313.10px;font-size:7.7px;color:#333;transform:scaleX(0.865);transform-origin:0 50%;">Tangency Weight</div>
<div class="r" style="left:785.3px;top:309.5px;width:142.20000000000005px;height:15.5px;background:#fff;border:1px solid #d8d8d8"></div>
<div class="t" style="left:787.00px;top:313.30px;font-size:7.7px;color:#333;transform:scaleX(0.867);transform-origin:0 50%;">1.00</div>
<div class="r" style="left:702.5px;top:329.3px;width:236.5px;height:1.0px;background:#d8d8d8"></div>
<div class="t" style="left:709.00px;top:337.80px;font-size:7.7px;color:#333;transform:scaleX(0.850);transform-origin:0 50%;">Corner Type</div>
<div class="r" style="left:785px;top:333.8px;width:142.5px;height:16.0px;background:#fff;border:1px solid #d8d8d8"></div>
<div class="t" style="left:799.00px;top:337.80px;font-size:7.7px;color:#333;transform:scaleX(0.850);transform-origin:0 50%;">Rolling Ball</div>
<svg style="left:920.3px;top:340.6px" width="4" height="3"><polygon points="0,0 3.6,0 1.8,2.5" fill="#222"/></svg>
<svg style="left:787px;top:336.3px" width="11" height="11" viewBox="0 0 11 11"><path d="M1,3 L6,3 L6,10 L1,10 Z" fill="#ddd" stroke="#666" stroke-width="0.7"/><path d="M3,1 L8,1 Q10,1 10,3 L10,6 L6,6 L6,3 L3,3Z" fill="#3a9be0"/></svg>
<div class="r" style="left:702.5px;top:351px;width:244.5px;height:1px;background:#dcdcdc"></div>
<svg style="left:706px;top:359.5px" width="8" height="8"><circle cx="4" cy="4" r="3.8" fill="#111"/><rect x="3.4" y="3.3" width="1.3" height="3.2" fill="#fff"/><rect x="3.4" y="1.6" width="1.3" height="1.1" fill="#fff"/></svg>
<div class="r" style="left:860px;top:357.3px;width:37.5px;height:11.699999999999989px;background:#ececec;border:1px solid #cfcfcf"></div>
<div class="t" style="left:873.85px;top:359.19px;font-size:7.9px;color:#777;transform:scaleX(0.850);transform-origin:0 50%;">OK</div>
<div class="r" style="left:903.3px;top:357.3px;width:37.40000000000009px;height:11.699999999999989px;background:#ececec;border:1px solid #cfcfcf"></div>
<div class="t" style="left:911.55px;top:359.19px;font-size:7.9px;color:#666;transform:scaleX(0.850);transform-origin:0 50%;">Cancel</div>
<svg style="left:957.3px;top:147.2px" width="7" height="7"><circle cx="3.2" cy="3.2" r="3" fill="#333"/><rect x="1.5" y="2.7" width="3.4" height="1" fill="#fff"/></svg>
<svg style="left:1172px;top:148px" width="8" height="6"><polygon points="0,0.5 3.5,3 0,5.5" fill="#333"/><polygon points="3.5,0.5 7,3 3.5,5.5" fill="#333"/></svg>
<div class="r" style="left:961.2px;top:169.8px;width:198.79999999999995px;height:20.5px;border-radius:4px;background:linear-gradient(90deg,#e38692 0%,#e9a0aa 25%,#f3d3d8 42%,#ffffff 55%,#e4f1e4 68%,#bfe0bf 85%,#a6d2a6 100%);box-shadow:0 0 5px rgba(0,0,0,0.6)"></div>
<div class="t" style="left:1000.20px;top:175.09px;font-size:10.6px;color:#fff;transform:scaleX(0.957);transform-origin:0 50%;font-weight:bold;letter-spacing:0.3px;text-shadow:0 0 2px rgba(0,0,0,0.2)"><span style="font-size:7.5px">HU</span> HunTip – Aktív segéd</div>
<div class="r" style="left:961.2px;top:196.8px;width:206.20000000000005px;height:15.5px;border-radius:4px;background:#1b1b1b;border:1px solid #3c3c3c"></div>
<div class="t" style="left:965.00px;top:200.03px;font-size:8.6px;color:#fff;transform:scaleX(0.893);transform-origin:0 50%;font-weight:bold">Fillet (3D)</div>
<div class="r" style="left:961.2px;top:220.4px;width:198.39999999999986px;height:336.6px;border-radius:6px;background:#242424"></div>
<div class="r" style="left:970.5px;top:229.7px;width:179.5px;height:324.3px;border-radius:6px;background:#2a2a2a;border:1px solid #393939"></div>
<svg width="1184" height="621" viewBox="0 0 1184 621" style="left:0;top:0"><polygon points="978.6,239.8 984.5,239.8 981.55,245" fill="#3f9ff0"/></svg>
<div class="t" style="left:987.80px;top:237.92px;font-size:8.8px;color:#3f9ff0;transform:scaleX(0.958);transform-origin:0 50%;font-weight:bold">Fillet (3D)</div>
<div class="t" style="left:979.00px;top:253.76px;font-size:8.15px;color:#f0f0f0;">Lekerekítés</div>
<div class="t" style="left:979.00px;top:277.72px;font-size:8.8px;color:#f4f4f4;transform:scaleX(0.960);transform-origin:0 50%;-webkit-text-stroke:0.15px #f4f4f4">Test élét vagy éleit lekerekíti. Tehát</div>
<div class="t" style="left:979.00px;top:289.72px;font-size:8.8px;color:#f4f4f4;transform:scaleX(0.960);transform-origin:0 50%;-webkit-text-stroke:0.15px #f4f4f4">egyszerre nem csak egy, hanem több él is</div>
<div class="t" style="left:979.00px;top:301.72px;font-size:8.8px;color:#f4f4f4;transform:scaleX(0.960);transform-origin:0 50%;-webkit-text-stroke:0.15px #f4f4f4">lekerekíthető. Ha egy felületet választunk,</div>
<div class="t" style="left:979.00px;top:313.72px;font-size:8.8px;color:#f4f4f4;transform:scaleX(0.960);transform-origin:0 50%;-webkit-text-stroke:0.15px #f4f4f4">akkor a felület összes határoló élét</div>
<div class="t" style="left:979.00px;top:325.72px;font-size:8.8px;color:#f4f4f4;transform:scaleX(0.960);transform-origin:0 50%;-webkit-text-stroke:0.15px #f4f4f4">kerekítjük le. Egyszerre több méretű</div>
<div class="t" style="left:979.00px;top:337.72px;font-size:8.8px;color:#f4f4f4;transform:scaleX(0.960);transform-origin:0 50%;-webkit-text-stroke:0.15px #f4f4f4">lekerekítést is elvégezhetünk (a Type</div>
<div class="t" style="left:979.00px;top:349.72px;font-size:8.8px;color:#f4f4f4;transform:scaleX(0.960);transform-origin:0 50%;-webkit-text-stroke:0.15px #f4f4f4">ablakban + gombbal vehetünk fel új</div>
<div class="t" style="left:979.00px;top:361.72px;font-size:8.8px;color:#f4f4f4;transform:scaleX(0.960);transform-origin:0 50%;-webkit-text-stroke:0.15px #f4f4f4">értéket).</div>
<svg width="1184" height="621" viewBox="0 0 1184 621" style="left:0;top:0"><defs><pattern id="dots" width="1.5" height="1.5" patternUnits="userSpaceOnUse"><rect width="1.5" height="1.5" fill="none"/><rect width="0.6" height="0.6" fill="#000" opacity="0.12"/></pattern><clipPath id="thclip"><rect x="978.6" y="384.2" width="164.5" height="164.4" rx="5"/></clipPath><linearGradient id="filTh" gradientUnits="userSpaceOnUse" x1="1061" y1="497" x2="1076" y2="522"><stop offset="0" stop-color="#8a8678"/><stop offset="0.55" stop-color="#a7a397"/><stop offset="0.8" stop-color="#8d897c"/><stop offset="1" stop-color="#75715f"/></linearGradient></defs><g clip-path="url(#thclip)"><rect x="978.6" y="384.2" width="164.5" height="164.4" fill="#fbfbfb"/><line x1="970" y1="342.2" x2="1150" y2="446.6" stroke="#f0f0f0" stroke-width="0.5"/><line x1="970" y1="453.8" x2="1150" y2="349.4" stroke="#f0f0f0" stroke-width="0.5"/><line x1="970" y1="364.2" x2="1150" y2="468.6" stroke="#f0f0f0" stroke-width="0.5"/><line x1="970" y1="475.8" x2="1150" y2="371.4" stroke="#f0f0f0" stroke-width="0.5"/><line x1="970" y1="386.2" x2="1150" y2="490.6" stroke="#f0f0f0" stroke-width="0.5"/><line x1="970" y1="497.8" x2="1150" y2="393.4" stroke="#f0f0f0" stroke-width="0.5"/><line x1="970" y1="408.2" x2="1150" y2="512.6" stroke="#f0f0f0" stroke-width="0.5"/><line x1="970" y1="519.8" x2="1150" y2="415.4" stroke="#f0f0f0" stroke-width="0.5"/><line x1="970" y1="430.2" x2="1150" y2="534.6" stroke="#f0f0f0" stroke-width="0.5"/><line x1="970" y1="541.8" x2="1150" y2="437.4" stroke="#f0f0f0" stroke-width="0.5"/><line x1="970" y1="452.2" x2="1150" y2="556.6" stroke="#f0f0f0" stroke-width="0.5"/><line x1="970" y1="563.8" x2="1150" y2="459.4" stroke="#f0f0f0" stroke-width="0.5"/><line x1="970" y1="474.2" x2="1150" y2="578.6" stroke="#f0f0f0" stroke-width="0.5"/><line x1="970" y1="585.8" x2="1150" y2="481.4" stroke="#f0f0f0" stroke-width="0.5"/><line x1="970" y1="496.2" x2="1150" y2="600.6" stroke="#f0f0f0" stroke-width="0.5"/><line x1="970" y1="607.8" x2="1150" y2="503.4" stroke="#f0f0f0" stroke-width="0.5"/><line x1="970" y1="518.2" x2="1150" y2="622.6" stroke="#f0f0f0" stroke-width="0.5"/><line x1="970" y1="629.8" x2="1150" y2="525.4" stroke="#f0f0f0" stroke-width="0.5"/><line x1="970" y1="540.2" x2="1150" y2="644.6" stroke="#f0f0f0" stroke-width="0.5"/><line x1="970" y1="651.8" x2="1150" y2="547.4" stroke="#f0f0f0" stroke-width="0.5"/><line x1="970" y1="562.2" x2="1150" y2="666.6" stroke="#f0f0f0" stroke-width="0.5"/><line x1="970" y1="673.8" x2="1150" y2="569.4" stroke="#f0f0f0" stroke-width="0.5"/><line x1="970" y1="584.2" x2="1150" y2="688.6" stroke="#f0f0f0" stroke-width="0.5"/><line x1="970" y1="695.8" x2="1150" y2="591.4" stroke="#f0f0f0" stroke-width="0.5"/><line x1="970" y1="606.2" x2="1150" y2="710.6" stroke="#f0f0f0" stroke-width="0.5"/><line x1="970" y1="717.8" x2="1150" y2="613.4" stroke="#f0f0f0" stroke-width="0.5"/><line x1="970" y1="628.2" x2="1150" y2="732.6" stroke="#f0f0f0" stroke-width="0.5"/><line x1="970" y1="739.8" x2="1150" y2="635.4" stroke="#f0f0f0" stroke-width="0.5"/><line x1="978" y1="470" x2="1060" y2="540" stroke="#f6dada" stroke-width="0.4"/><polygon points="983.2,498.5 1004.7,510.4 1004.7,532.3 983.2,519.3" fill="#8e8d86"/><polygon points="1004.7,510.4 1027.3,509 1044.4,499.5 1046.4,500.5 1046.4,520.7 1027.3,530.3 1004.7,532.3" fill="#83827b"/><polygon points="1046.4,500.5 1056,503.6 1065.6,519.3 1065.6,531 1046.4,520.7" fill="#8f8e88"/><polygon points="1065.6,519.3 1099.8,500 1100,510.5 1065.6,531" fill="#7a766a"/><polygon points="983.2,498.5 1049.2,459.8 1090.9,483.7 1056,503.6 1044.4,499.5 1027.3,509 1004.7,510.4" fill="#8e8979"/><path d="M1056,503.6 L1090.9,483.7 Q1099,487 1099.8,499 L1099.8,500 L1065.6,519.3 Q1058,516 1056,503.6Z" fill="url(#filTh)"/><polygon points="983.2,498.5 1049.2,459.8 1090.9,483.7 1099.8,500 1100,510.5 1065.6,531 1046.4,520.7 1027.3,530.3 1004.7,532.3 983.2,519.3" fill="url(#dots)"/><path d="M983.2,498.5 L1049.2,459.8 L1090.9,483.7" fill="none" stroke="#6ea6d8" stroke-width="0.5"/><path d="M1004.7,510.4 L1027.3,509 L1044.4,499.5" fill="none" stroke="#7fb0dd" stroke-width="0.5"/><path d="M1056,503.6 L1090.9,483.7 M1004.7,510.4 L1004.7,532.3 M1027.3,509 L1027.3,530.3 M1046.4,500.5 L1046.4,520.7 M1065.6,519.3 L1065.6,531" stroke="#555" stroke-width="0.35" fill="none"/><ellipse cx="1047.8" cy="480.3" rx="13" ry="7.5" fill="#4f4c47" stroke="#3a3a3a" stroke-width="0.4"/><ellipse cx="1048.5" cy="482.3" rx="10.5" ry="5.2" fill="#5e5b55"/><circle cx="1044.4" cy="499.8" r="1.2" fill="#2aa8f0"/><rect x="1021" y="513.2" width="22" height="3.4" fill="#e8e8e8" stroke="#666" stroke-width="0.3"/><rect x="1067" y="509" width="21.8" height="4.6" fill="#f4f4f4"/><rect x="1073" y="510" width="9" height="2.6" fill="#3cc86a"/><rect x="1059.5" y="387.5" width="82.1" height="76.6" fill="#eeeeee" stroke="#d4d4d4" stroke-width="0.4"/><rect x="1059.5" y="387.5" width="82.1" height="76.6" fill="url(#dots)" opacity="0.6"/><rect x="1059.5" y="387.5" width="82.1" height="4.5" fill="#e4e4e4"/><rect x="1086.9" y="393.5" width="47.3" height="4.4" fill="#fff" stroke="#d8d8d8" stroke-width="0.3"/><rect x="1062" y="395.09999999999997" width="14" height="1.1" fill="#b4b4b4"/><rect x="1088.5" y="394.5" width="2.4" height="2.4" fill="#8ab8e0"/><rect x="1092" y="395.2" width="7" height="1" fill="#999"/><rect x="1061.5" y="399.8" width="73.5" height="23.2" fill="#fff" stroke="#d8d8d8" stroke-width="0.3"/><rect x="1061.5" y="399.8" width="73.5" height="5.5" fill="#a8cbf2"/><rect x="1089" y="400.6" width="12" height="3.8" fill="#fff"/><rect x="1086.9" y="425.0" width="47.3" height="4.4" fill="#fff" stroke="#d8d8d8" stroke-width="0.3"/><rect x="1062" y="426.59999999999997" width="14" height="1.1" fill="#b4b4b4"/><rect x="1088.5" y="426.0" width="2.4" height="2.4" fill="#8ab8e0"/><rect x="1092" y="426.7" width="7" height="1" fill="#999"/><rect x="1086.9" y="430.7" width="11.7" height="5.5" fill="#1797d8"/><rect x="1062" y="432.8" width="14" height="1.2" fill="#b4b4b4"/><rect x="1062" y="438.9" width="12" height="1.2" fill="#b4b4b4"/><rect x="1087.5" y="437.8" width="2.6" height="2.6" fill="#777"/><rect x="1086.9" y="443.3" width="47.3" height="4.4" fill="#fff" stroke="#d8d8d8" stroke-width="0.3"/><rect x="1062" y="444.9" width="14" height="1.1" fill="#b4b4b4"/><rect x="1088.5" y="444.3" width="2.4" height="2.4" fill="#8ab8e0"/><rect x="1092" y="445.0" width="7" height="1" fill="#999"/><line x1="1060" y1="449.3" x2="1140" y2="449.3" stroke="#d8d8d8" stroke-width="0.3"/><rect x="1086.9" y="451.5" width="47.3" height="4.4" fill="#fff" stroke="#d8d8d8" stroke-width="0.3"/><rect x="1062" y="453.09999999999997" width="14" height="1.1" fill="#b4b4b4"/><rect x="1088.5" y="452.5" width="2.4" height="2.4" fill="#8ab8e0"/><rect x="1092" y="453.2" width="7" height="1" fill="#999"/><circle cx="1062.2" cy="461.4" r="1.3" fill="#111"/><rect x="1112" y="459.4" width="13" height="4" fill="#eaeaea" stroke="#ccc" stroke-width="0.3"/><rect x="1127.5" y="459.4" width="12.5" height="4" fill="#eaeaea" stroke="#ccc" stroke-width="0.3"/></g></svg>
<svg width="1184" height="621" viewBox="0 0 1184 621" style="left:0;top:0"><path d="M967.8,544.6 Q972.5,544.6 972.5,548.6 Q972.5,550.5 970.5,550.3 Q968.6,550 969,552 Q969.2,553.8 967.3,553.8 Q963.2,553.5 963.2,549.2 Q963.2,544.6 967.8,544.6Z" fill="#f2c22e"/><circle cx="965.6" cy="548" r="0.9" fill="#3a9a3a"/><circle cx="967.5" cy="546.4" r="0.9" fill="#e04040"/><circle cx="970" cy="547" r="0.9" fill="#3050d0"/><circle cx="966" cy="551" r="0.9" fill="#7a4a20"/></svg>
<svg width="1184" height="621" viewBox="0 0 1184 621" style="left:0;top:0"><defs><radialGradient id="qg"><stop offset="0" stop-color="#2a4a6a"/><stop offset="0.6" stop-color="#23405e"/><stop offset="1" stop-color="#1b2a3a" stop-opacity="0"/></radialGradient></defs><circle cx="1153.6" cy="549.2" r="8.5" fill="url(#qg)"/><text x="1153.6" y="552.3" font-size="8.5" font-family="Liberation Sans" font-weight="bold" fill="#f4f4f4" text-anchor="middle">?</text></svg>
<div class="r" style="left:1169px;top:159.8px;width:12px;height:404.7px;background:#f0f0f0"></div>
<div class="r" style="left:1171px;top:170.6px;width:7.2999999999999545px;height:367.4px;background:#c4c4c4"></div>
<svg style="left:1172.2px;top:165px" width="5" height="3"><polygon points="0,3 5,3 2.5,0" fill="#999"/></svg>
<svg style="left:1172px;top:556px" width="6" height="4"><polygon points="0,0 6,0 3,4" fill="#555"/></svg>
<div class="r" style="left:1137px;top:571.4px;width:37.299999999999955px;height:11.600000000000023px;background:#ececec;border:1px solid #cfcfcf"></div>
<div class="t" style="left:1147.02px;top:573.09px;font-size:7.9px;color:#666;transform:scaleX(0.850);transform-origin:0 50%;">Close</div>
<div class="r" style="left:25px;top:87.7px;width:94px;height:11.799999999999997px;background:#ececec"></div>
<div class="r" style="left:26px;top:88.5px;width:2px;height:10.0px;background:#e07ae0"></div>
<div class="r" style="left:43px;top:88.5px;width:60px;height:10.5px;background:#8a8a8a"></div>
<div class="t" style="left:64.00px;top:89.70px;font-size:7.7px;color:#f2f2f2;transform:scaleX(0.903);transform-origin:0 50%;font-weight:bold">(Unsaved)</div>
<svg style="left:45.5px;top:88.3px" width="9" height="11" viewBox="0 0 9 11"><path d="M0.5,2.5 L2.5,0.5 L8.5,0.5 L8.5,8.5 L6.5,10.5 L0.5,10.5Z" fill="#e9e9ee" stroke="#777" stroke-width="0.5"/><path d="M6.5,2.5 L8.5,0.5 L8.5,8.5 L6.5,10.5Z" fill="#c9cad2"/><path d="M0.5,2.5 L2.5,0.5 L8.5,0.5 L6.5,2.5Z" fill="#f8f8fa"/></svg>
<svg style="left:106px;top:89.5px" width="9" height="9"><circle cx="4.5" cy="4.5" r="3.8" fill="#fff" stroke="#333" stroke-width="0.9"/><circle cx="4.5" cy="4.5" r="1.6" fill="#222"/></svg>
<svg style="left:12px;top:89px" width="8" height="8"><polygon points="0.5,7.5 7.5,7.5 7.5,0.5" fill="#bbb" stroke="#333" stroke-width="0.8"/></svg>
<svg style="left:30px;top:90.7px" width="10" height="6" viewBox="0 0 10 6"><path d="M0.5,3 Q5,-1.5 9.5,3 Q5,7.5 0.5,3Z" fill="none" stroke="#aaa" stroke-width="0.8"/><circle cx="5" cy="3" r="1.4" fill="#aaa"/></svg>
<div class="r" style="left:36px;top:102.3px;width:82px;height:12.0px;background:#ececec"></div>
<svg style="left:24px;top:103.7px" width="8" height="10" viewBox="0 0 8 10"><polygon points="0.8,0.8 6.8,5 0.8,9.2" fill="#fff" stroke="#444" stroke-width="1" stroke-linejoin="round"/></svg>
<svg style="left:37px;top:103.3px" width="10" height="10" viewBox="0 0 10 10"><path d="M8.32,4.27 L9.56,4.37 L9.56,5.63 L8.32,5.73 L7.86,6.83 L8.67,7.78 L7.78,8.67 L6.83,7.86 L5.73,8.32 L5.63,9.56 L4.37,9.56 L4.27,8.32 L3.17,7.86 L2.22,8.67 L1.33,7.78 L2.14,6.83 L1.68,5.73 L0.44,5.63 L0.44,4.37 L1.68,4.27 L2.14,3.17 L1.33,2.22 L2.22,1.33 L3.17,2.14 L4.27,1.68 L4.37,0.44 L5.63,0.44 L5.73,1.68 L6.83,2.14 L7.78,1.33 L8.67,2.22 L7.86,3.17Z" fill="#6f6f6f"/><circle cx="5" cy="5" r="1.3" fill="#ececec"/></svg>
<div class="t" style="left:56.00px;top:105.10px;font-size:7.7px;color:#333;transform:scaleX(0.853);transform-origin:0 50%;">Document Settings</div>
<div class="r" style="left:36px;top:117.4px;width:67.4px;height:12.0px;background:#ececec"></div>
<svg style="left:24px;top:118.80000000000001px" width="8" height="10" viewBox="0 0 8 10"><polygon points="0.8,0.8 6.8,5 0.8,9.2" fill="#fff" stroke="#444" stroke-width="1" stroke-linejoin="round"/></svg>
<svg style="left:37.5px;top:119.4px" width="10" height="8" viewBox="0 0 10 8"><path d="M0,0 L4,0 L5,1.2 L10,1.2 L10,8 L0,8Z" fill="#8c8c8c"/><path d="M0,2 L10,2" stroke="#a8a8a8" stroke-width="0.5"/></svg>
<div class="t" style="left:56.00px;top:120.20px;font-size:7.7px;color:#333;transform:scaleX(0.887);transform-origin:0 50%;">Named Views</div>
<div class="r" style="left:36px;top:132.3px;width:58px;height:12.0px;background:#ececec"></div>
<svg style="left:24px;top:133.70000000000002px" width="8" height="10" viewBox="0 0 8 10"><polygon points="0.8,0.8 6.8,5 0.8,9.2" fill="#fff" stroke="#444" stroke-width="1" stroke-linejoin="round"/></svg>
<svg style="left:37.5px;top:135.3px" width="10" height="6" viewBox="0 0 10 6"><path d="M0.5,3 Q5,-1.5 9.5,3 Q5,7.5 0.5,3Z" fill="none" stroke="#c4c4c4" stroke-width="0.8"/><circle cx="5" cy="3" r="1.4" fill="#c4c4c4"/></svg>
<svg style="left:37.5px;top:134.3px" width="10" height="8"><path d="M1.5,7 L8.5,1" stroke="#c4c4c4" stroke-width="0.8"/></svg>
<svg style="left:53px;top:134.3px" width="10" height="8" viewBox="0 0 10 8"><path d="M0,0 L4,0 L5,1.2 L10,1.2 L10,8 L0,8Z" fill="#8c8c8c"/><path d="M0,2 L10,2" stroke="#a8a8a8" stroke-width="0.5"/></svg>
<div class="t" style="left:71.50px;top:135.10px;font-size:7.7px;color:#333;transform:scaleX(0.828);transform-origin:0 50%;">Origin</div>
<div class="r" style="left:36px;top:146.8px;width:62.5px;height:12.0px;background:#ececec"></div>
<svg style="left:24px;top:148.20000000000002px" width="8" height="10" viewBox="0 0 8 10"><polygon points="0.8,0.8 6.8,5 0.8,9.2" fill="#fff" stroke="#444" stroke-width="1" stroke-linejoin="round"/></svg>
<svg style="left:37.5px;top:149.8px" width="10" height="6" viewBox="0 0 10 6"><path d="M0.5,3 Q5,-1.5 9.5,3 Q5,7.5 0.5,3Z" fill="none" stroke="#999" stroke-width="0.8"/><circle cx="5" cy="3" r="1.4" fill="#999"/></svg>
<svg style="left:53px;top:148.8px" width="10" height="8" viewBox="0 0 10 8"><path d="M0,0 L4,0 L5,1.2 L10,1.2 L10,8 L0,8Z" fill="#8c8c8c"/><path d="M0,2 L10,2" stroke="#a8a8a8" stroke-width="0.5"/></svg>
<div class="t" style="left:71.50px;top:149.60px;font-size:7.7px;color:#333;transform:scaleX(0.854);transform-origin:0 50%;">Bodies</div>
<div class="r" style="left:36px;top:161.6px;width:70px;height:12.0px;background:#ececec"></div>
<svg style="left:24px;top:163.0px" width="8" height="10" viewBox="0 0 8 10"><polygon points="0.8,0.8 6.8,5 0.8,9.2" fill="#fff" stroke="#444" stroke-width="1" stroke-linejoin="round"/></svg>
<svg style="left:37.5px;top:164.6px" width="10" height="6" viewBox="0 0 10 6"><path d="M0.5,3 Q5,-1.5 9.5,3 Q5,7.5 0.5,3Z" fill="none" stroke="#999" stroke-width="0.8"/><circle cx="5" cy="3" r="1.4" fill="#999"/></svg>
<svg style="left:53px;top:163.6px" width="10" height="8" viewBox="0 0 10 8"><path d="M0,0 L4,0 L5,1.2 L10,1.2 L10,8 L0,8Z" fill="#8c8c8c"/><path d="M0,2 L10,2" stroke="#a8a8a8" stroke-width="0.5"/></svg>
<div class="t" style="left:71.50px;top:164.40px;font-size:7.7px;color:#333;transform:scaleX(0.868);transform-origin:0 50%;">Sketches</div>
<svg width="1184" height="621" viewBox="0 0 1184 621" style="left:0;top:0"><path d="M51.0,158.3 L52.6,156.2 M54.1,158.3 L55.7,156.2 M57.2,158.3 L58.8,156.2 M60.3,158.3 L61.9,156.2 M63.4,158.3 L65.0,156.2 M66.5,158.3 L68.1,156.2 M69.6,158.3 L71.2,156.2 M72.7,158.3 L74.3,156.2 M75.8,158.3 L77.4,156.2 M78.9,158.3 L80.5,156.2 M82.0,158.3 L83.6,156.2 M85.1,158.3 L86.7,156.2 M88.2,158.3 L89.8,156.2 M91.3,158.3 L92.9,156.2 M94.4,158.3 L96.0,156.2 " stroke="#3b5f96" stroke-width="0.9"/></svg>
<svg width="1184" height="621" viewBox="0 0 1184 621" style="left:0;top:0"><circle cx="177.3" cy="580.9" r="2.9" fill="#1e1e1e"/><path d="M175.6,580.9 L179,580.9 M177.3,579.2 L177.3,582.6" stroke="#ddd" stroke-width="0.8"/></svg>
<svg style="left:5px;top:600px" width="75" height="13" viewBox="0 0 75 13"><rect x="2" y="2.5" width="1.5" height="8" fill="#333"/><polygon points="4,6.5 10,2.5 10,10.5" fill="#333"/><polygon points="17,6.5 22,2.5 22,10.5" fill="#333"/><rect x="22" y="5" width="2.5" height="3" fill="#333"/><polygon points="32,2 40,6.5 32,11" fill="#333"/><rect x="47" y="5" width="2.5" height="3" fill="#333"/><polygon points="49.5,2.5 55,6.5 49.5,10.5" fill="#333"/><polygon points="63,2.5 69,6.5 63,10.5" fill="#333"/><rect x="69.5" y="2.5" width="1.5" height="8" fill="#333"/></svg>
<div class="r" style="left:89px;top:596px;width:71px;height:3.5px;background:#e38ae3"></div>
<svg style="left:90px;top:601px" width="11" height="11" viewBox="0 0 11 11"><rect x="0.8" y="0.8" width="8.4" height="8.4" fill="#fafafa" stroke="#9a9a9a" stroke-width="0.5" stroke-dasharray="1 0.7"/><rect x="0.2" y="0.2" width="1.2" height="1.2" fill="#3a8ee0"/><rect x="8.6" y="0.2" width="1.2" height="1.2" fill="#3a8ee0"/><rect x="0.2" y="8.6" width="1.2" height="1.2" fill="#3a8ee0"/><path d="M3,7 L3,3 L7,3" fill="none" stroke="#7aaee8" stroke-width="0.6" stroke-dasharray="0.8 0.6"/><path d="M3,7 Q6.5,6.5 7,3" fill="none" stroke="#666" stroke-width="0.6"/><path d="M5.2,9.6 L9,5.8" stroke="#f0b030" stroke-width="1.5"/><path d="M8.7,6.1 L9.8,5" stroke="#e84040" stroke-width="1.5"/></svg>
<svg style="left:105px;top:601px" width="11" height="11" viewBox="0 0 11 11"><rect x="0.8" y="0.8" width="8.4" height="8.4" fill="#fafafa" stroke="#9a9a9a" stroke-width="0.5" stroke-dasharray="1 0.7"/><rect x="0.2" y="0.2" width="1.2" height="1.2" fill="#3a8ee0"/><rect x="8.6" y="0.2" width="1.2" height="1.2" fill="#3a8ee0"/><rect x="0.2" y="8.6" width="1.2" height="1.2" fill="#3a8ee0"/><path d="M3,7 L3,3 L7,3" fill="none" stroke="#7aaee8" stroke-width="0.6" stroke-dasharray="0.8 0.6"/><path d="M3,7 Q6.5,6.5 7,3" fill="none" stroke="#666" stroke-width="0.6"/><path d="M5.2,9.6 L9,5.8" stroke="#f0b030" stroke-width="1.5"/><path d="M8.7,6.1 L9.8,5" stroke="#e84040" stroke-width="1.5"/></svg>
<svg style="left:119px;top:601px" width="11" height="11" viewBox="0 0 11 11"><rect x="0.8" y="0.8" width="8.4" height="8.4" fill="#fafafa" stroke="#9a9a9a" stroke-width="0.5" stroke-dasharray="1 0.7"/><rect x="0.2" y="0.2" width="1.2" height="1.2" fill="#3a8ee0"/><rect x="8.6" y="0.2" width="1.2" height="1.2" fill="#3a8ee0"/><rect x="0.2" y="8.6" width="1.2" height="1.2" fill="#3a8ee0"/><path d="M3,7 L3,3 L7,3" fill="none" stroke="#7aaee8" stroke-width="0.6" stroke-dasharray="0.8 0.6"/><path d="M3,7 Q6.5,6.5 7,3" fill="none" stroke="#666" stroke-width="0.6"/><path d="M5.2,9.6 L9,5.8" stroke="#f0b030" stroke-width="1.5"/><path d="M8.7,6.1 L9.8,5" stroke="#e84040" stroke-width="1.5"/></svg>
<svg style="left:134px;top:601px" width="11" height="11" viewBox="0 0 11 11"><rect x="0.8" y="0.8" width="8.4" height="8.4" fill="#fafafa" stroke="#9a9a9a" stroke-width="0.5" stroke-dasharray="1 0.7"/><rect x="0.2" y="0.2" width="1.2" height="1.2" fill="#3a8ee0"/><rect x="8.6" y="0.2" width="1.2" height="1.2" fill="#3a8ee0"/><rect x="0.2" y="8.6" width="1.2" height="1.2" fill="#3a8ee0"/><path d="M3,7 L3,3 L7,3" fill="none" stroke="#7aaee8" stroke-width="0.6" stroke-dasharray="0.8 0.6"/><path d="M3,7 Q6.5,6.5 7,3" fill="none" stroke="#666" stroke-width="0.6"/><path d="M5.2,9.6 L9,5.8" stroke="#f0b030" stroke-width="1.5"/><path d="M8.7,6.1 L9.8,5" stroke="#e84040" stroke-width="1.5"/></svg>
<svg style="left:149px;top:601px" width="10" height="11" viewBox="0 0 10 11"><path d="M1,3 L3,1 L9,1 L9,8 L7,10 L1,10Z" fill="#4a9ee8"/><path d="M3,1 L9,1 L7,3 L1,3Z" fill="#8cc4f4"/><path d="M7,3 L9,1 L9,8 L7,10Z" fill="#2d7cc8"/></svg>
<svg style="left:94px;top:612px" width="62" height="6"><path d="M1,0.5 L1,4.3 L60.5,4.3 M15.8,0.5 L15.8,4.3 M30.6,0.5 L30.6,4.3 M45.5,0.5 L45.5,4.3 M60.5,0.5 L60.5,4.3" fill="none" stroke="#aaa" stroke-width="0.8"/></svg>
<svg style="left:157px;top:596px" width="10" height="22"><polygon points="1,1 9,1 9,4 5,7 1,4" fill="#555"/><rect x="4.3" y="5" width="1.4" height="16" fill="#333"/></svg>
<div class="r" style="left:519px;top:572.7px;width:146px;height:14.299999999999955px;background:#eeeeee"></div>
<svg width="1184" height="621" viewBox="0 0 1184 621" style="left:0;top:0"><path d="M526,575 L526,585.5" stroke="#333" stroke-width="1.1"/><ellipse cx="526" cy="580.5" rx="4.8" ry="1.9" fill="none" stroke="#333" stroke-width="1"/><polygon points="524.5,576.5 526,574.5 527.5,576.5" fill="#333"/><polygon points="534.1999999999999,579 537.4,579 535.8,581" fill="#333"/><rect x="541.2" y="577" width="10" height="7.5" rx="0.8" fill="#e8e8e8" stroke="#444" stroke-width="0.9"/><path d="M543,579.5 L549.5,579.5 M543,582 L549.5,582" stroke="#666" stroke-width="0.6"/><path d="M543.5,577 L543.5,575.2 M549,577 L549,575.2" stroke="#444" stroke-width="0.9"/><path d="M559.5,580 L559.5,576.5 Q560.5,575.5 561.5,576.5 L561.5,579 L561.5,575.5 Q562.5,574.5 563.5,575.5 L563.5,579 L563.5,576 Q564.5,575 565.5,576 L565.5,579.5 L565.5,577.5 Q566.8,576.8 567.5,578 L567.5,581.5 Q567,585 563.5,585.5 Q560.5,585.5 559,582.5 L557.5,580 Q558,578.8 559.5,580Z" fill="#f4f4f4" stroke="#444" stroke-width="0.8"/><circle cx="577.3" cy="580" r="3.3" fill="#eef4fa" stroke="#444" stroke-width="1"/><path d="M579.6,582.3 L582.5,585.2" stroke="#333" stroke-width="1.6"/><path d="M581.5,575 L581.5,578.5 M579.8,576.8 L583.2,576.8" stroke="#333" stroke-width="0.7"/><rect x="588.8" y="575.2" width="10" height="8.5" fill="none" stroke="#777" stroke-width="0.6" stroke-dasharray="1 0.8"/><circle cx="593.5" cy="579.5" r="3.6" fill="#eef4fa" stroke="#444" stroke-width="1"/><path d="M596,582 L599.3,585.3" stroke="#333" stroke-width="1.6"/><polygon points="602.8,579 606.0,579 604.4,581" fill="#333"/><rect x="609.8" y="575.2" width="10.2" height="7.8" fill="#6aa8e6" stroke="#444" stroke-width="0.8"/><rect x="613" y="583" width="4" height="1.8" fill="#666"/><polygon points="621.1999999999999,579 624.4,579 622.8,581" fill="#333"/><rect x="629" y="575" width="9.8" height="9.8" fill="#ddd" stroke="#555" stroke-width="0.8"/><path d="M631.5,575 L631.5,584.8 M634,575 L634,584.8 M636.4,575 L636.4,584.8 M629,577.5 L638.8,577.5 M629,580 L638.8,580 M629,582.4 L638.8,582.4" stroke="#888" stroke-width="0.4"/><polygon points="640.3,579 643.5,579 641.9,581" fill="#333"/><rect x="647.8" y="575.2" width="4.6" height="4.4" fill="#5b8fd6"/><rect x="652.9" y="575.2" width="4.6" height="4.4" fill="#5b8fd6"/><rect x="647.8" y="580.2" width="4.6" height="4.4" fill="#5b8fd6"/><rect x="652.9" y="580.2" width="4.6" height="4.4" fill="#5b8fd6"/><polygon points="659.6999999999999,579 662.9,579 661.3,581" fill="#333"/></svg>
<svg width="1184" height="621" viewBox="0 0 1184 621" style="left:0;top:0"><defs><radialGradient id="vcsh" cx="0.5" cy="0.5" r="0.5"><stop offset="0" stop-color="#000" stop-opacity="0.18"/><stop offset="1" stop-color="#000" stop-opacity="0"/></radialGradient></defs><ellipse cx="1147" cy="124" rx="20" ry="9" fill="url(#vcsh)"/><polygon points="1123.8,93.8 1145,83.5 1166.4,93.8 1144.5,104.8" fill="#ececec" stroke="#9a9a9a" stroke-width="0.6"/><polygon points="1123.8,93.8 1144.5,104.8 1144.5,130 1125,117" fill="#e2e2e2" stroke="#9a9a9a" stroke-width="0.6"/><polygon points="1144.5,104.8 1166.4,93.8 1163.8,116.4 1144.5,130" fill="#dadada" stroke="#9a9a9a" stroke-width="0.6"/><text x="1145" y="95.5" font-family="Liberation Sans" font-size="4.5" fill="#888" text-anchor="middle" transform="rotate(20 1145 94)">TOP</text><text x="1134" y="114" font-family="Liberation Sans" font-size="5" fill="#888" text-anchor="middle" transform="rotate(22 1134 112)">FRONT</text><text x="1155" y="114" font-family="Liberation Sans" font-size="5" fill="#888" text-anchor="middle" transform="rotate(-22 1155 112)">RIGHT</text><path d="M1123.5,89.5 L1125,117" stroke="#4b4bef" stroke-width="0.9"/><path d="M1125,117 L1149,133" stroke="#f08080" stroke-width="0.9"/><text x="1121.3" y="87" font-family="Liberation Sans" font-size="7" fill="#5a5af0" text-anchor="middle">Z</text><text x="1151.5" y="139.5" font-family="Liberation Sans" font-size="7" fill="#f07070" text-anchor="middle">X</text></svg>
<svg style="left:1164.4px;top:600.1px" width="12" height="12" viewBox="0 0 12 12"><path d="M9.81,5.16 L11.35,5.26 L11.35,6.74 L9.81,6.84 L9.28,8.10 L10.31,9.26 L9.26,10.31 L8.10,9.28 L6.84,9.81 L6.74,11.35 L5.26,11.35 L5.16,9.81 L3.90,9.28 L2.74,10.31 L1.69,9.26 L2.72,8.10 L2.19,6.84 L0.65,6.74 L0.65,5.26 L2.19,5.16 L2.72,3.90 L1.69,2.74 L2.74,1.69 L3.90,2.72 L5.16,2.19 L5.26,0.65 L6.74,0.65 L6.84,2.19 L8.10,2.72 L9.26,1.69 L10.31,2.74 L9.28,3.90Z" fill="#6a6a6a"/><circle cx="6" cy="6" r="1.6" fill="#f0f0f0"/></svg>
<div class="r" style="left:729.3px;top:437.3px;width:98.70000000000005px;height:11.300000000000011px;background:#f6f6f6;border:1px solid #9a9a9a"></div>
<div class="t" style="left:732.00px;top:439.60px;font-size:7.7px;color:#222;transform:scaleX(0.974);transform-origin:0 50%;">Hold Ctrl to modify selection</div>
<div class="r" style="left:626px;top:322.1px;width:65.70000000000005px;height:13.399999999999977px;background:#f4f4f4"></div>
<div class="r" style="left:634.8px;top:322.9px;width:41.200000000000045px;height:11.800000000000011px;background:#fff"></div>
<svg width="1184" height="621" viewBox="0 0 1184 621" style="left:0;top:0"><path d="M628.5,323.5 L628.5,334 M630.5,323.5 L630.5,334" stroke="#d0d0d0" stroke-width="0.5" stroke-dasharray="0.8 0.8"/><path d="M633.3,322.5 L633.3,335" stroke="#dcdcdc" stroke-width="0.8"/><path d="M657.6,324 L657.6,333" stroke="#222" stroke-width="0.8"/></svg>
<div class="t" style="left:653.50px;top:324.80px;font-size:7.7px;color:#333;transform:scaleX(0.850);transform-origin:0 50%;-webkit-text-stroke:0.3px #333">3</div>
<svg style="left:683.5px;top:323px" width="3" height="11"><circle cx="1.5" cy="2.3" r="0.65" fill="#777"/><circle cx="1.5" cy="5.5" r="0.65" fill="#777"/><circle cx="1.5" cy="8.7" r="0.65" fill="#777"/></svg>
<svg width="1184" height="621" viewBox="0 0 1184 621" style="left:0;top:0"><g transform="translate(683,355.3) rotate(-55)"><rect x="-8.3" y="-6.2" width="16.6" height="12.4" rx="6.2" fill="#f2f2f2" stroke="#111" stroke-width="1.2"/><line x1="0" y1="-6.2" x2="0" y2="6.2" stroke="#111" stroke-width="1"/></g><polygon points="682.4,352.4 686,350.9 685.7,354.6" fill="#111"/><polygon points="680,357.2 683,359.6 679.6,360.6" fill="#111"/></svg>
<svg width="1184" height="621" viewBox="0 0 1184 621" style="left:0;top:0"><polygon points="539.9,281.6 544.4,278.7 547.8,284.7 552.8,283.5 552.5,297 540.7,290.6 544.4,288" fill="#0f98dc" stroke="#2a5a80" stroke-width="1.8" stroke-linejoin="round"/><polygon points="539.9,281.6 544.4,278.7 547.8,284.7 552.8,283.5 552.5,297 540.7,290.6 544.4,288" fill="#0f98dc" stroke="#fff" stroke-width="1" stroke-linejoin="round"/></svg>
</body></html>
